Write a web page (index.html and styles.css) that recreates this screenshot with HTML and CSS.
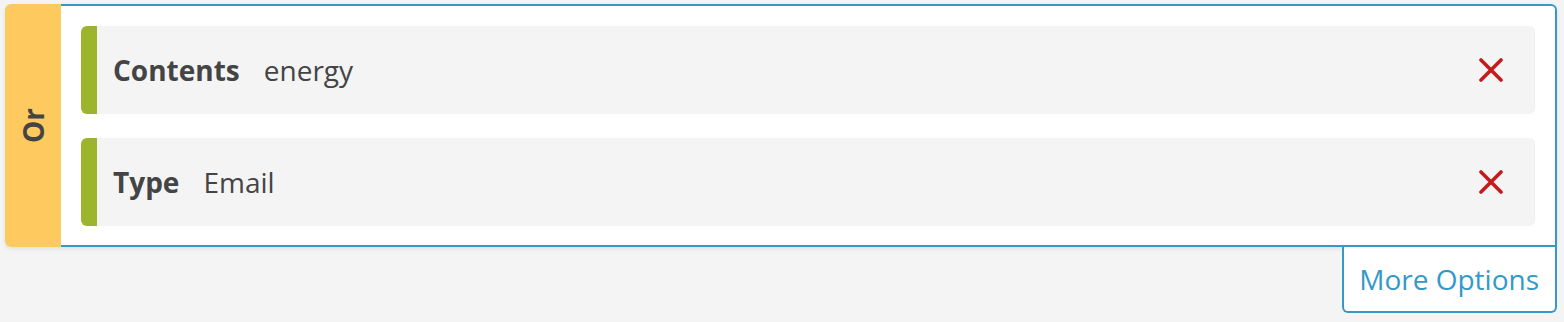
FILE: index.html
```html
<!DOCTYPE html>
<html lang="en">
<head>
<meta charset="utf-8">
<title>Filter group</title>
<link rel="stylesheet" href="styles.css">
</head>
<body>
<div class="page">
  <div class="group">
    <div class="group-tab"><span class="group-label">Or</span></div>
    <div class="group-panel">
      <div class="rule">
        <div class="rule-text"><span class="rule-name">Contents</span><span class="rule-value">energy</span></div>
        <button class="rule-remove" aria-label="Remove">
          <svg viewBox="0 0 24 24" width="24" height="24"><path d="M2 2 L22 22 M22 2 L2 22" /></svg>
        </button>
      </div>
      <div class="rule">
        <div class="rule-text"><span class="rule-name">Type</span><span class="rule-value">Email</span></div>
        <button class="rule-remove" aria-label="Remove">
          <svg viewBox="0 0 24 24" width="24" height="24"><path d="M2 2 L22 22 M22 2 L2 22" /></svg>
        </button>
      </div>
    </div>
  </div>
  <div class="actions">
    <button class="more-options">More Options</button>
  </div>
</div>
</body>
</html>
```

FILE: styles.css
```css
html, body {
  margin: 0;
  padding: 0;
  background: #f4f4f4;
  font-family: "Open Sans", "Liberation Sans", sans-serif;
  color: #444;
}

.page {
  padding: 4px 7px 0 5px;
}

.group {
  display: flex;
  height: 243px;
  border-radius: 6px;
  box-shadow: 0 2px 4px rgba(0, 0, 0, 0.08);
}

.group-tab {
  width: 56px;
  flex: none;
  background: #fec95e;
  border-radius: 6px 0 0 6px;
  display: flex;
  align-items: center;
  justify-content: center;
}

.group-label {
  writing-mode: vertical-rl;
  transform: rotate(180deg);
  font-weight: 700;
  font-size: 28px;
  line-height: 1;
  color: #444;
}

.group-panel {
  flex: 1;
  background: #fff;
  border: 2px solid #3399c9;
  border-left: none;
  border-radius: 0 6px 0 0;
  padding: 20px 20px 19px 20px;
  display: flex;
  flex-direction: column;
  gap: 24px;
}

.rule {
  height: 88px;
  box-sizing: border-box;
  display: flex;
  align-items: center;
  background: #f4f4f4;
  border-left: 16px solid #9cb52c;
  border-right: 1px solid #f1f0e6;
  border-radius: 6px;
  padding: 0 31px 0 16px;
}

.rule-text {
  flex: 1;
  font-size: 28px;
  white-space: nowrap;
}

.rule-name {
  font-weight: 700;
  margin-right: 24px;
}

.rule-remove {
  border: none;
  background: transparent;
  padding: 0;
  width: 24px;
  height: 24px;
  display: flex;
  cursor: pointer;
}

.rule-remove svg path {
  stroke: #c51b1b;
  stroke-width: 3.6;
  stroke-linecap: round;
  fill: none;
}

.actions {
  display: flex;
  justify-content: flex-end;
}

.more-options {
  height: 66px;
  box-sizing: border-box;
  background: #fff;
  border: 2px solid #3399c9;
  border-top: none;
  border-radius: 0 0 6px 6px;
  padding: 0 16px 0 15px;
  font-family: "Open Sans", "Liberation Sans", sans-serif;
  font-size: 28px;
  color: #3399c9;
  cursor: pointer;
}
```
